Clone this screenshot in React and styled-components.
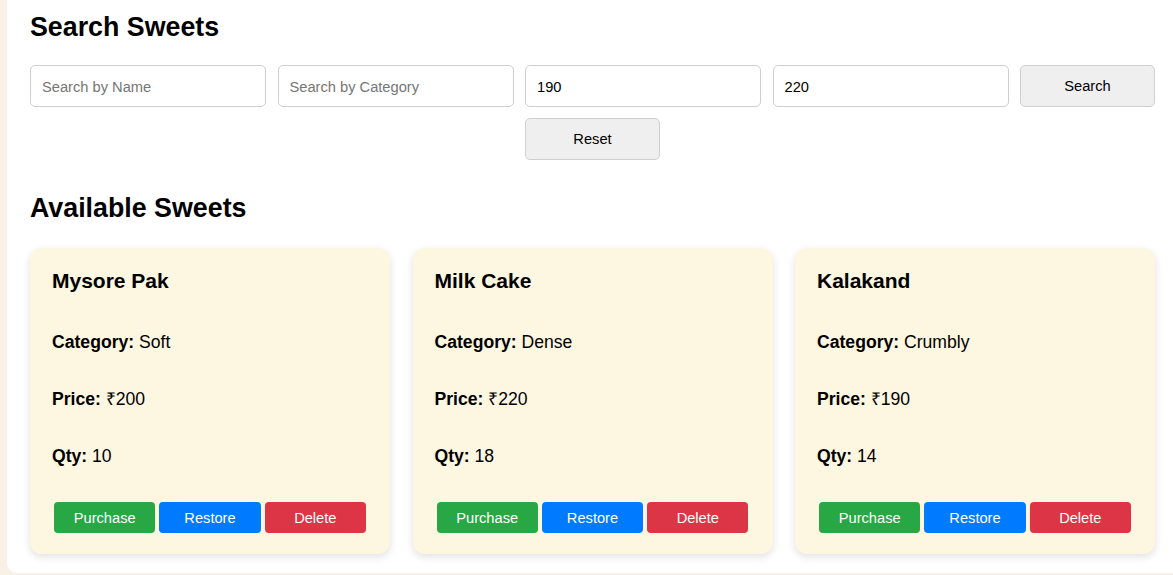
import React from "react";
import styled, { createGlobalStyle } from "styled-components";

const GlobalStyle = createGlobalStyle`
  html, body {
    margin: 0;
    padding: 0;
    background: #faf1e6;
    font-family: "Liberation Sans", Arial, sans-serif;
    overflow: hidden;
  }
`;

const Page = styled.div`
  padding-left: 7px;
  height: 575px;
`;

const Panel = styled.main`
  background: #fff;
  border-radius: 0 0 0 10px;
  padding: 12px 18px 19px 23px;
  box-sizing: border-box;
`;

const Heading = styled.h2`
  margin: 0 0 ${({ $gap }) => $gap}px;
  font-size: 26.8px;
  font-weight: bold;
  line-height: 31px;
  color: #000;
`;

const SearchForm = styled.div`
  display: flex;
  flex-wrap: wrap;
  justify-content: center;
  gap: 11px 11.5px;
  width: 1125px;
  margin-bottom: 33px;
`;

const Field = styled.input`
  width: 236px;
  height: 42px;
  box-sizing: border-box;
  border: 1px solid #cfcfcf;
  border-radius: 5px;
  padding: 1px 11px 0;
  font-family: inherit;
  font-size: 14.67px;
  color: #000;
  background: #fff;
  outline: none;

  &::placeholder {
    color: #767676;
  }
`;

const PlainButton = styled.button`
  width: 135px;
  height: 42px;
  box-sizing: border-box;
  border: 1px solid #cfcfcf;
  border-radius: 5px;
  background: #efefef;
  font-family: inherit;
  font-size: 14.67px;
  color: #000;
`;

const Grid = styled.div`
  display: grid;
  grid-template-columns: repeat(3, 360px);
  gap: 22.5px;
  width: 1125px;
`;

const Card = styled.div`
  background: #fdf6e0;
  border-radius: 12px;
  box-shadow: 0 3px 9px rgba(0, 0, 0, 0.12);
  padding: 21px 22px 21px;
  display: flex;
  flex-direction: column;
`;

const Name = styled.h3`
  margin: 0 0 39px;
  font-size: 21px;
  line-height: 24px;
  font-weight: bold;
`;

const Line = styled.p`
  margin: 0 0 37px;
  font-size: 17.6px;
  line-height: 20px;

  &:last-of-type {
    margin-bottom: 36px;
  }

  b {
    font-weight: bold;
  }
`;

const Actions = styled.div`
  display: flex;
`;

const colors = {
  purchase: "#28a745",
  restore: "#007bff",
  delete: "#dc3545",
};

const ActionButton = styled.button`
  flex: 1;
  margin: 0 2px;
  height: 31px;
  border: none;
  border-radius: 4px;
  background: ${({ $kind }) => colors[$kind]};
  color: #fff;
  font-family: inherit;
  font-size: 14.67px;
`;

const sweets = [
  { name: "Mysore Pak", category: "Soft", price: 200, qty: 10 },
  { name: "Milk Cake", category: "Dense", price: 220, qty: 18 },
  { name: "Kalakand", category: "Crumbly", price: 190, qty: 14 },
];

export default function App() {
  return (
    <Page>
      <GlobalStyle />
      <Panel>
        <Heading $gap={22}>Search Sweets</Heading>
        <SearchForm>
          <Field placeholder="Search by Name" />
          <Field placeholder="Search by Category" />
          <Field defaultValue="190" />
          <Field defaultValue="220" />
          <PlainButton>Search</PlainButton>
          <PlainButton>Reset</PlainButton>
        </SearchForm>

        <Heading $gap={24}>Available Sweets</Heading>
        <Grid>
          {sweets.map((s) => (
            <Card key={s.name}>
              <Name>{s.name}</Name>
              <Line>
                <b>Category:</b> {s.category}
              </Line>
              <Line>
                <b>Price:</b> ₹{s.price}
              </Line>
              <Line>
                <b>Qty:</b> {s.qty}
              </Line>
              <Actions>
                <ActionButton $kind="purchase">Purchase</ActionButton>
                <ActionButton $kind="restore">Restore</ActionButton>
                <ActionButton $kind="delete">Delete</ActionButton>
              </Actions>
            </Card>
          ))}
        </Grid>
      </Panel>
    </Page>
  );
}
